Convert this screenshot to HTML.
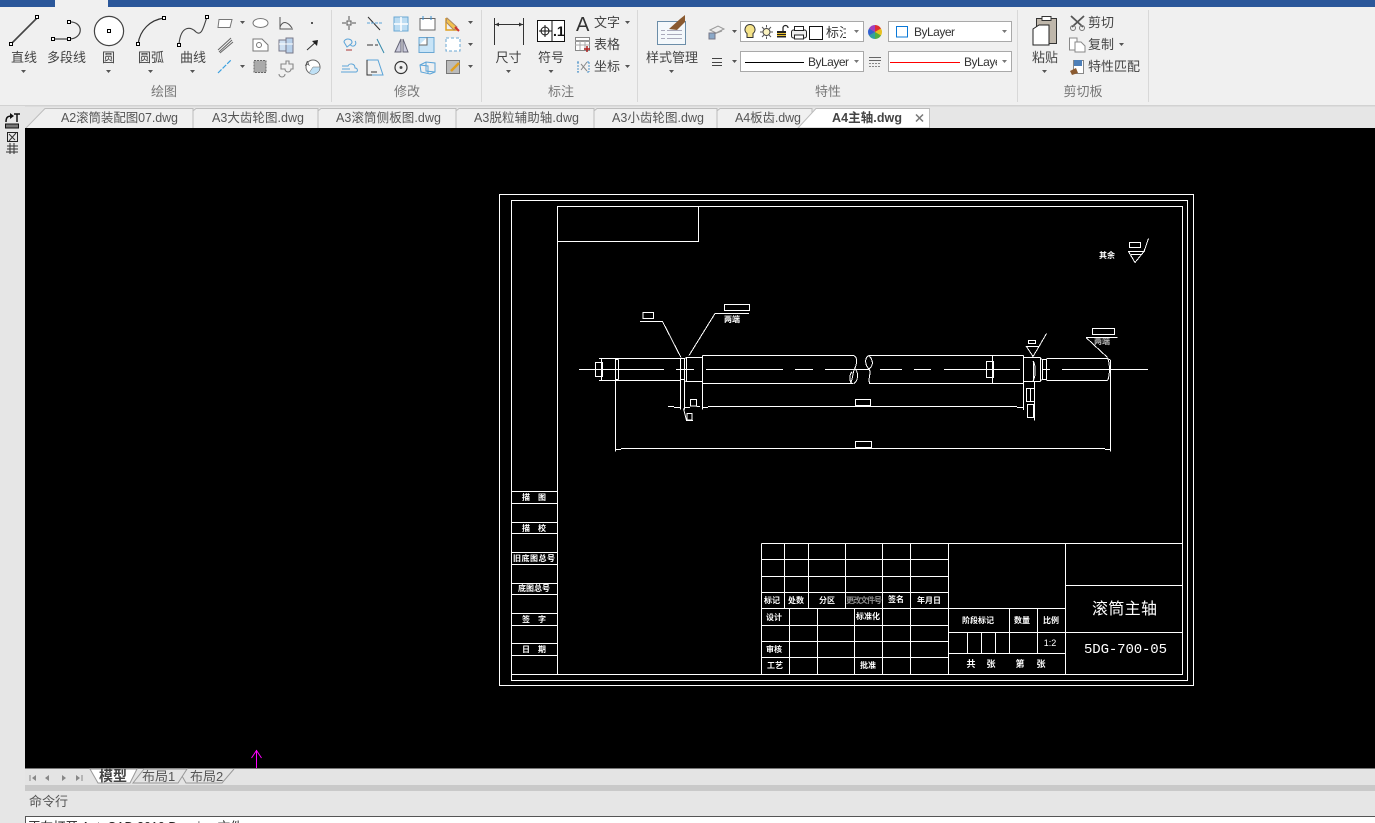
<!DOCTYPE html>
<html lang="zh"><head><meta charset="utf-8"><title>CAD</title>
<style>
html,body{margin:0;padding:0;width:1375px;height:823px;overflow:hidden;background:#f0f0f0}
svg{display:block;position:absolute;left:0;top:0}
text{font-family:"Liberation Sans","Noto Sans CJK SC",sans-serif}
.r{font-size:13px;fill:#444;text-anchor:middle}
.l{font-size:13px;fill:#444}
.g{font-size:13px;fill:#777;text-anchor:middle}
.t{font-size:12.5px;fill:#555}
.c{fill:none;stroke:#fff;stroke-width:1;shape-rendering:crispEdges}
.x{font-size:8px;fill:#fff;text-anchor:middle;font-weight:bold}
.i{fill:none;stroke:#555;stroke-width:1}
.s{fill:#fff;stroke:#000;stroke-width:1;shape-rendering:crispEdges}
.b{fill:#fff;stroke:#a9a9a9;stroke-width:1;shape-rendering:crispEdges}
.tab{fill:#f0f0f0;stroke:#bdbdbd;stroke-width:1}
</style></head><body>
<svg width="1375" height="823" viewBox="0 0 1375 823" xmlns="http://www.w3.org/2000/svg">
<rect width="1375" height="823" fill="#e6e6e6"/>
<rect width="1375" height="105" fill="#f0f0f0"/>
<rect width="55" height="7" fill="#2b579a"/><rect x="108" width="1267" height="7" fill="#2b579a"/>
<rect y="105" width="1375" height="1.5" fill="#d2d2d2"/>
<g stroke="#d8d8d8"><path d="M331.5 10V102M481.5 10V102M637.5 10V102M1017.5 10V102M1148.5 10V102"/></g>

<!-- DRAW -->
<path d="M11 44L37 18" stroke="#444" stroke-width="1.6"/>
<rect class="s" x="9.5" y="42.5" width="3" height="3"/><rect class="s" x="35.5" y="15.5" width="3" height="3"/>
<path d="M53 39H69M69 22C84 21 84 39 69 39" fill="none" stroke="#444" stroke-width="1.2"/>
<rect class="s" x="51.5" y="37.5" width="3" height="3"/><rect class="s" x="67.5" y="37.5" width="3" height="3"/><rect class="s" x="67.5" y="20.5" width="3" height="3"/>
<circle cx="109" cy="31" r="14.6" fill="#fff" stroke="#444" stroke-width="1.2"/><rect class="s" x="107.5" y="29.5" width="3" height="3"/>
<path d="M138 44C140 30 150 20 164 18" fill="none" stroke="#333" stroke-width="1.2"/>
<rect class="s" x="136.5" y="42.5" width="3" height="3"/><rect class="s" x="162.5" y="16.5" width="3" height="3"/>
<path d="M179 44C181 24 192 27 196 32C202 37 204 25 207 17" fill="none" stroke="#444" stroke-width="1.1"/>
<rect class="s" x="177.5" y="43.5" width="3" height="3"/><rect class="s" x="205.5" y="15.5" width="3" height="3"/>
<text class="r" x="24" y="62">直线</text><text class="r" x="66.500" y="62">多段线</text><text class="r" x="108.500" y="62">圆</text><text class="r" x="151" y="62">圆弧</text><text class="r" x="193" y="62">曲线</text>
<g fill="#555"><path d="M21 70h5l-2.500 3z"/><path d="M106 70h5l-2.500 3zM148 70h5l-2.500 3zM190 70h5l-2.500 3zM240 21h5l-2.500 3zM240 65h5l-2.500 3zM468 21h5l-2.500 3zM468 43h5l-2.500 3zM468 65h5l-2.500 3zM506 70h5l-2.500 3zM548.500 70h5l-2.500 3zM625 21h5l-2.500 3zM625 65h5l-2.500 3zM669 70h5l-2.500 3zM732 30h5l-2.500 3zM732 60h5l-2.500 3zM1042 70h5l-2.500 3zM1119 43h5l-2.500 3z"/></g>
<path d="M219 19.500H232L230 27.500H218Z" fill="#fff" stroke="#777"/>
<ellipse cx="260.500" cy="23" rx="7.500" ry="4.500" fill="#fff" stroke="#777"/>
<path d="M280 17V29H293M280 27C283 20 288 22 292 28" class="i"/>
<rect x="311" y="22" width="2" height="2" fill="#555"/>
<path d="M218 50L231 38M219 52L232 40M220 53L233 42" stroke="#666" fill="none"/>
<path d="M253 39H262L268 45V51H253Z" fill="#fff" stroke="#777"/><circle cx="259" cy="45" r="2.500" fill="none" stroke="#777"/>
<rect x="279" y="40" width="14" height="11" fill="#cfe0f2" stroke="#778"/><path d="M286 38H293V53H286Z" fill="#b8d0ea" stroke="#778"/><path d="M279 44H293" stroke="#fff"/>
<path d="M307 50L317 41" stroke="#333"/><path d="M312 41L318 40L317 46Z" fill="#222"/>
<path d="M218 73L231 60" stroke="#3aa0e0" stroke-width="1.200" stroke-dasharray="5 1.500"/>
<rect x="254" y="60.500" width="12" height="12" fill="#aaa" stroke="#666" stroke-dasharray="2 1"/>
<path d="M281 64h5v-3h3v3h4v5h-2a3 3 0 1 1-6 0h-4z M279 74a3 3 0 1 0 6 0" fill="none" stroke="#888" stroke-width="1.100"/>
<circle cx="313" cy="67" r="7" fill="#fff" stroke="#666"/><path d="M313 67H320A7 7 0 0 1 309 73Z" fill="#bfe0f5" stroke="#666" stroke-width=".5"/><text x="305" y="66" font-size="7" fill="#444">A</text>
<text class="g" x="164" y="96">绘图</text>

<!-- MODIFY -->
<g class="i">
<path d="M342 23H346M352 23H356M349 16V20M349 26V30"/><rect x="347" y="21" width="4" height="4"/>
<path d="M368 17L380 30" stroke="#333"/><path d="M367 23H383" stroke="#5ba4d8" stroke-dasharray="3 1"/>
<path d="M344 42a4 3 0 1 1 7 2l-4 3z" stroke="#5ba4d8"/><path d="M355 41a3 3 0 1 1 -5 3" stroke="#5ba4d8"/><path d="M352 50H346" stroke="#a33"/>
<path d="M367 45H373M375 45H378" stroke="#333"/><path d="M377 39L384 53" stroke="#38a"/>
<path d="M341 72H356C358 72 358 68 355 68C355 63 349 63 348 66H342M342 69H350" stroke="#5ba4d8"/>
<path d="M367 60H378L383 75H367Z" stroke="#5ba4d8"/><path d="M367 60V75H372" stroke="#333"/><path d="M371 72H377" stroke="#333"/>
<circle cx="401" cy="67.500" r="6" stroke="#333" stroke-width="1.200"/><circle cx="401" cy="67.500" r="1" fill="#333"/>
<path d="M420 65L426 62L435 63V72L430 74L421 72Z M426 62V71L435 72M420 65L428 66V74" stroke="#5ba4d8"/>
</g>
<path d="M394 17h14v14h-14z" fill="#bcdcf2" stroke="#6aa7d3"/><path d="M401 17V31M394 24H408" stroke="#fff" stroke-width="1.500"/>
<path d="M420 18.500H435V30H420Z" fill="#fff" stroke="#666"/><path d="M423 16V20M431 16V20" stroke="#3a8fd0"/>
<path d="M446 18V30H458" stroke="#e0a020" stroke-width="1.500" fill="none"/><path d="M447 18L457 27L454 30L446 22Z" fill="#f2c14e" stroke="#a86"/><path d="M455 27L459 31" stroke="#c33" stroke-width="2"/>
<path d="M395 52L401 39V52ZM403 39L408 52H403Z" fill="#ccd" stroke="#667"/>
<rect x="419" y="37.500" width="15" height="15" fill="#c8e4f7" stroke="#6aa7d3"/><path d="M419 45H427V37.500" fill="#fff" stroke="#666"/>
<rect x="446" y="38" width="14" height="13" fill="#fff" stroke="#6aa7d3" stroke-dasharray="3 2"/>
<rect x="446.500" y="60.500" width="13" height="13" fill="#bbb" stroke="#777"/><path d="M451 71L459 63" stroke="#e0a020" stroke-width="2.500"/>
<text class="g" x="407" y="96">修改</text>

<!-- ANNOTATE -->
<path d="M494.500 18V45M523.500 18V45" stroke="#333" fill="none"/><path d="M495 24.500H523" stroke="#333"/><path d="M495 24.500l4-2v4zM523 24.500l-4-2v4z" fill="#333"/>
<rect x="537.500" y="20.500" width="27" height="21" fill="#fff" stroke="#111"/><path d="M552 20.500V41.500" stroke="#111"/><circle cx="545" cy="31" r="4" fill="none" stroke="#111"/><path d="M539 31H552M545 25V37" stroke="#111"/><text x="553" y="36" font-size="14" font-weight="bold" fill="#111">.1</text>
<text class="r" x="508.500" y="62">尺寸</text><text class="r" x="551" y="62">符号</text>
<text x="576" y="31" font-size="20" fill="#333">A</text><text class="l" x="594" y="27">文字</text>
<rect x="575.500" y="37.500" width="14" height="13" fill="#fff" stroke="#888"/><path d="M575 41H590" stroke="#999" stroke-width="2"/><path d="M580 41V50M585 41V50M575 45H590" stroke="#aaa"/><path d="M584 49H590M587 46V52" stroke="#b02020" stroke-width="1.500"/><text class="l" x="594" y="49">表格</text>
<path d="M577 62h3M587 62h3M577 72h3M587 72h3M578 62v10M589 62v10" stroke="#4d92c9" stroke-dasharray="2 1" fill="none"/><path d="M581 70L587 62M581 64L587 71" stroke="#888"/><text class="l" x="594" y="71">坐标</text>
<text class="g" x="561" y="96">标注</text>

<!-- PROPS -->
<rect x="657.500" y="21.500" width="28" height="23" fill="#f4f8fb" stroke="#6b8da8"/><path d="M661 30.500h4M667 30.500h15M661 34.500h4M667 34.500h15M661 38.500h4M667 38.500h15" stroke="#aab" fill="none"/><path d="M669 29L680 19L685 15L685 22L677 30Z" fill="#8a5a30"/>
<text class="r" x="672" y="62">样式管理</text>
<path d="M710 30L718 26L724 29L716 33Z M714 34L722 31" fill="#eee" stroke="#999"/><rect x="709" y="33" width="6" height="6" fill="#8aa8c8" stroke="#778"/>
<path d="M712 58.500H722M712 62.500H722M712 65.500H722" stroke="#444"/>
<rect class="b" x="740.500" y="21.500" width="123" height="20"/><rect class="b" x="888.500" y="21.500" width="123" height="20"/>
<rect class="b" x="740.500" y="51.500" width="123" height="20"/><rect class="b" x="888.500" y="51.500" width="123" height="20"/>
<path d="M750 24.500a5 5 0 0 1 3 9v4h-6v-4a5 5 0 0 1 3-9z" fill="#f5e38a" stroke="#333"/>
<circle cx="766.500" cy="32" r="3.500" fill="#fbf3c0" stroke="#444"/><path d="M766.500 25v2.500M766.500 36.500v2.500M760 32h2.500M770.500 32h2.500M762 27l2 2M769 35l2 2M771 27l-2 2M764 35l-2 2" stroke="#555"/>
<rect x="777" y="31" width="9" height="6.500" fill="#222"/><path d="M783 31v-3a2.500 2.500 0 0 1 5 0" fill="none" stroke="#222" stroke-width="1.200"/><path d="M777 33.500h9M777 35.500h9" stroke="#e8c030"/>
<rect x="791.500" y="30" width="15" height="8" rx="2" fill="#eee" stroke="#222"/><rect x="794.500" y="26.500" width="9" height="4" fill="#fff" stroke="#222"/><rect x="794.500" y="35" width="9" height="4" fill="#fff" stroke="#222"/>
<rect x="809.500" y="26.500" width="13" height="13" fill="#fff" stroke="#111"/>
<svg x="826" y="20" width="20" height="22"><text x="0" y="17" font-size="13" fill="#333">标注</text></svg>
<g fill="#777"><path d="M854 30h5l-2.500 3zM1002 30h5l-2.500 3zM854 60h5l-2.500 3zM1002 60h5l-2.500 3z"/></g>
<path d="M875 25L881 28.500V35.500L875 39L869 35.500V28.500Z" fill="#e8a020"/><path d="M875 32L869 28.500A7 7 0 0 1 875 25Z" fill="#a040c0"/><path d="M875 32V25A7 7 0 0 1 881 28.500Z" fill="#e03030"/><path d="M875 32L881 28.500A7 7 0 0 1 881 35.500Z" fill="#e8c020"/><path d="M875 32L881 35.500A7 7 0 0 1 875 39Z" fill="#50b040"/><path d="M875 32V39A7 7 0 0 1 869 35.500Z" fill="#30a0a0"/><path d="M875 32L869 35.500A7 7 0 0 1 869 28.500Z" fill="#3060d0"/>
<rect x="896.500" y="26.500" width="11" height="10.500" fill="#fff" stroke="#0a78d7"/>
<text x="914" y="36" font-size="12" fill="#333" textLength="41">ByLayer</text>
<path d="M745 62.500H804" stroke="#000"/><text x="808" y="66" font-size="12" fill="#333" textLength="41">ByLayer</text>
<path d="M869 57.500H881M869 60.500H881" stroke="#666"/><path d="M869 63.500H881M869 66.500H881" stroke="#888" stroke-dasharray="2 1"/>
<path d="M890 62.500H960" stroke="#f00"/>
<svg x="964" y="52" width="33" height="19"><text x="0" y="14" font-size="12" fill="#333" textLength="41">ByLayer</text></svg>
<text class="g" x="828" y="96">特性</text>

<!-- CLIPBOARD -->
<rect x="1036.500" y="18.500" width="20" height="25" fill="#bfb7ab" stroke="#333"/><rect x="1042" y="16.500" width="9" height="4" fill="#fff" stroke="#333"/>
<path d="M1033 29L1039 25H1049V45H1033Z" fill="#fff" stroke="#222"/>
<text class="r" x="1045" y="62">粘贴</text>
<path d="M1071 16L1083 27M1084 16L1072 27" stroke="#555" stroke-width="1.800"/><circle cx="1073" cy="28" r="2.500" fill="none" stroke="#777"/><circle cx="1082" cy="28" r="2.500" fill="none" stroke="#777"/>
<text class="l" x="1088" y="27">剪切</text>
<path d="M1069.500 38H1077V50H1069.500Z" fill="#fff" stroke="#888"/><path d="M1075 42H1081L1085 46V52H1075Z" fill="#fff" stroke="#888"/>
<text class="l" x="1088" y="49">复制</text>
<rect x="1073.500" y="60.500" width="10" height="13" fill="#fff" stroke="#888"/><rect x="1074" y="60" width="8" height="6" fill="#4d7fb8"/><path d="M1070 71L1076 68L1078 73L1072 75Z" fill="#8a5a30"/>
<text class="l" x="1088" y="71">特性匹配</text>
<text class="g" x="1083" y="96">剪切板</text>

<!-- DOC TABS -->
<rect x="0" y="107" width="1375" height="21" fill="#e6e6e6"/>
<path class="tab" d="M26 128L45 108.500H193V128"/>
<path class="tab" d="M193 128V111L196 108.500H318V128"/>
<path class="tab" d="M318 128V111L321 108.500H456V128"/>
<path class="tab" d="M456 128V111L459 108.500H594V128"/>
<path class="tab" d="M594 128V111L597 108.500H717V128"/>
<path class="tab" d="M717 128V111L720 108.500H812V128"/>
<path d="M798 128L816 108.500H929.500V128Z" fill="#fff" stroke="#bdbdbd"/>
<text class="t" x="61" y="122" textLength="117">A2滚筒装配图07.dwg</text>
<text class="t" x="212" y="122" textLength="92">A3大齿轮图.dwg</text>
<text class="t" x="336" y="122" textLength="105">A3滚筒侧板图.dwg</text>
<text class="t" x="474" y="122" textLength="105">A3脱粒辅助轴.dwg</text>
<text class="t" x="612" y="122" textLength="92">A3小齿轮图.dwg</text>
<text class="t" x="735" y="122" textLength="66">A4板齿.dwg</text>
<text x="832" y="122" font-size="12.500" font-weight="bold" fill="#444" textLength="70">A4主轴.dwg</text>
<path d="M916 114.500L923 121.500M923 114.500L916 121.500" stroke="#777" stroke-width="1.500"/>
<!-- left toolbar -->
<rect x="0" y="106" width="25" height="717" fill="#e6e6e6"/>
<path d="M6 122C6 117 8 116 12 116" fill="none" stroke="#111" stroke-width="1.500"/><path d="M10 113L14 116L10 119Z" fill="#111"/><path d="M14 114H20M17 114V122" stroke="#111" stroke-width="1.500"/>
<rect x="5.500" y="124" width="13" height="4" fill="#777" stroke="#111"/>
<rect x="7.500" y="132.500" width="10" height="9" fill="none" stroke="#222"/><path d="M9 141L16 133M9 134L15 140" stroke="#333"/>
<path d="M7 146H18M10 143V154M14 143V154M7 149H18M6 152H18" stroke="#333" fill="none"/>

<!-- CANVAS -->
<rect x="25" y="128" width="1350" height="640" fill="#000"/>
<g class="c">
<rect x="499.500" y="194.500" width="694" height="491"/>
<rect x="511.500" y="200.500" width="676" height="480"/>
<rect x="557.500" y="206.500" width="625" height="468"/>
<path d="M511.500 674.500H557.500"/>
<path d="M557.500 241.500H698.500V206.500"/>
<path d="M511.500 491.500H557.500M511.500 503.500H557.500M511.500 522.500H557.500M511.500 533.500H557.500M511.500 552.500H557.500M511.500 564.500H557.500M511.500 583.500H557.500M511.500 594.500H557.500M511.500 613.500H557.500M511.500 625.500H557.500M511.500 643.500H557.500M511.500 655.500H557.500"/>
<!-- title block -->
<path d="M761.500 543.500H1182.500M761.500 543.500V674.500"/>
<path d="M761.500 559.500H948.500M761.500 576.500H948.500M761.500 592.500H948.500M761.500 608.500H1065.500M761.500 625.500H948.500M761.500 641.500H948.500M761.500 657.500H948.500"/>
<path d="M784.500 543.500V608.500M808.500 543.500V608.500M845.500 543.500V608.500M882.500 543.500V674.500M910.500 543.500V674.500M948.500 543.500V674.500M1065.500 543.500V674.500"/>
<path d="M789.500 608.500V674.500M817.500 608.500V674.500M854.500 608.500V674.500"/>
<path d="M948.500 632.500H1065.500M948.500 653.500H1065.500M1009.500 608.500V653.500M1037.500 608.500V653.500M967.500 632.500V653.500M981.500 632.500V653.500M995.500 632.500V653.500"/>
<path d="M1065.500 585.500H1182.500M1065.500 632.500H1182.500"/>
<!-- shaft centerlines -->
<path d="M579 369.500H664M676 369.500H694M706 369.500H783M795 369.500H813M825 369.500H869M914 369.500H931M944 369.500H1020M1042 369.500H1050M1062 369.500H1148M880 369.500H902"/>
<!-- shaft left -->
<path d="M599 358.500H680.500M599 380.500H680.500M601.500 358.500V380.500"/>
<rect x="595.500" y="362.500" width="7" height="14"/>
<path d="M615.500 358.500V451.500M618.500 359.500V379.500M615.500 359.500H618.500M615.500 379.500H618.500"/>
<path d="M680.500 358.500V409.500M684.500 358.500V409.500M680.500 358.500H684.500M680.500 379.500H684.500"/>
<path d="M686.500 357.500V381.500M686.500 357.500H702.500M686.500 381.500H702.500M684.500 358.500L686.500 357.500M684.500 381L686.500 381.500"/>
<path d="M702.500 355.500V409.500M702.500 355.500H853.500M702.500 383.500H853.500"/>
<path d="M853.500 355.500C858 357 857 364 854.500 369C852 374 853 381 850 383.500"/>
<path d="M855 369C859 373 858 381 854 383.500M852 372C849 375 849 381 852 383.500"/>
<path d="M869 355.500H1023.500M869 383.500H1023.500"/>
<path d="M869 355.500C864 358 865 365 869 369C872 373 867 380 870 383.500"/>
<path d="M869 355.500C873 360 874 365 869 369"/>
<path d="M992.500 355.500V383.500"/><rect x="986.500" y="361.500" width="7" height="16"/>
<path d="M1023.500 355.500V410M1023.500 357.500H1040.500M1023.500 381.500H1034.500M1034.500 381.500V420.500M1040.500 357.500V381.500M1034.500 381.500H1040.500"/>
<path d="M1033.500 361V381M1033 361C1036 365 1036 376 1033 381"/>
<path d="M1040.500 358.500L1042.500 359.500V379.500L1040.500 380.500M1042.500 359.500H1046.500V379.500H1042.500"/>
<path d="M1046.500 358.500H1107.500M1046.500 380.500H1107.500M1107.500 358.500C1110 362 1110 376 1107.500 380.500"/>
<path d="M1110.500 360V451.500"/>
<path d="M1107.500 358.500L1110.500 360"/>
<!-- dim lines -->
<path d="M668 406.500H674M674 407.500H680M684 407.500H690M696.500 406.500H700M702.500 407.500H708M708 406.500H1017M1017 407.500H1023"/>
<path d="M621 448.500H1105M615.500 449.500H621M1105 449.500H1110.500"/>
<rect x="855.500" y="399.500" width="15" height="6"/><rect x="855.500" y="441.500" width="16" height="6"/>
<rect x="690.500" y="399.500" width="6" height="6.500"/><rect x="687" y="413.500" width="5" height="6.500"/>
<path d="M686 420.500H693"/>
<path d="M683.500 408.500L686.500 420.500"/>
<!-- leaders -->
<path d="M640 321.500H662.500L681 357.500"/><rect x="643" y="312.500" width="10.500" height="6"/>
<path d="M715 313.500H749M715 313.500L689 355.500"/><rect x="724.500" y="304.500" width="25" height="6"/>
<path d="M1026.500 346.500H1039L1033 356.500ZM1039 346.500L1046.500 333.500"/><rect x="1028.500" y="340.500" width="7" height="3"/>
<rect x="1026.500" y="388.500" width="8" height="13"/><path d="M1030.500 388.500V401.500"/><rect x="1027.500" y="404.500" width="6" height="13"/>
<path d="M1086 337.500H1117.500M1086 337.500L1107.500 357.500"/><rect x="1092.500" y="328.500" width="22" height="6"/>
<!-- roughness -->
<rect x="1129.500" y="242.500" width="11" height="5"/>
<path d="M1128.500 251.500H1144L1135 262.500ZM1131 254.500H1141.500M1144 251.500L1148.500 238.500"/>
</g>
<!-- CAD text -->
<text class="x" x="732" y="322">两端</text><text class="x" x="1102" y="344" fill-opacity=".7">两端</text>
<text class="x" x="1107" y="258">其余</text>
<g fill="#fff">
<text class="x" x="534" y="500">描　图</text><text class="x" x="534" y="531">描　校</text><text class="x" x="534" y="561" textLength="42">旧底图总号</text><text class="x" x="534" y="591">底图总号</text><text class="x" x="534" y="622">签　字</text><text class="x" x="534" y="652">日　期</text>
<text class="x" x="772" y="603">标记</text><text class="x" x="796" y="603">处数</text><text class="x" x="827" y="603">分区</text><text class="x" x="864" y="603" fill-opacity=".55" textLength="36">更改文件号</text><text class="x" x="896" y="602">签名</text><text class="x" x="929" y="603">年月日</text>
<text class="x" x="774" y="620">设计</text><text class="x" x="868" y="619">标准化</text><text class="x" x="774" y="652">审核</text><text class="x" x="775" y="668">工艺</text><text class="x" x="868" y="668">批准</text>
<text class="x" x="978" y="623">阶段标记</text><text class="x" x="1022" y="623">数量</text><text class="x" x="1051" y="623">比例</text><text class="x" x="1050" y="646" style="font-size:9px;font-weight:normal">1:2</text>
<text class="x" x="971" y="667" style="font-size:9px">共</text><text class="x" x="991" y="667" style="font-size:9px">张</text><text class="x" x="1020" y="667" style="font-size:9px">第</text><text class="x" x="1041" y="667" style="font-size:9px">张</text>
<text x="1092" y="614" font-size="16" fill="#fff" textLength="65">滚筒主轴</text>
<text x="1084" y="653" fill="#fff" style="font-family:'Liberation Mono',monospace;font-size:14px" textLength="83">5DG-700-05</text>
</g>
<!-- UCS -->
<path d="M256.500 750V768M251.500 758L256.500 750.500L261.500 758" fill="none" stroke="#f0f" stroke-width="1"/>

<!-- BOTTOM -->
<rect x="25" y="768" width="1350" height="17" fill="#e4e4e4"/>
<rect x="25" y="768" width="1350" height="1" fill="#777"/>
<rect x="25" y="785" width="1350" height="6" fill="#c9c9c9"/>
<g fill="#888"><path d="M30 775V781" stroke="#888"/><path d="M36 775L32 778L36 781ZM49 775L45 778L49 781ZM62 775L66 778L62 781ZM76 775L80 778L76 781Z"/><path d="M82 775V781" stroke="#888"/></g>
<path d="M178 769L186 783H222L234 769" fill="#e4e4e4" stroke="#999"/>
<path d="M133 783L144 769H178L187 769L178 783Z" fill="#e4e4e4" stroke="#999"/>
<path d="M90 769L98 783H130L137 769Z" fill="#fff" stroke="#999"/>
<text x="99" y="781" font-size="14" font-weight="bold" fill="#444">模型</text>
<text x="142" y="781" font-size="13" fill="#555">布局1</text>
<text x="190" y="781" font-size="13" fill="#555">布局2</text>
<text x="29" y="806" font-size="13" fill="#555">命令行</text>
<rect x="25.500" y="816.500" width="1360" height="20" fill="#fff" stroke="#555"/>
<text x="28" y="831" font-size="12.500" fill="#222">正在打开 AutoCAD 2010 Drawing 文件</text>
</svg>
</body></html>
